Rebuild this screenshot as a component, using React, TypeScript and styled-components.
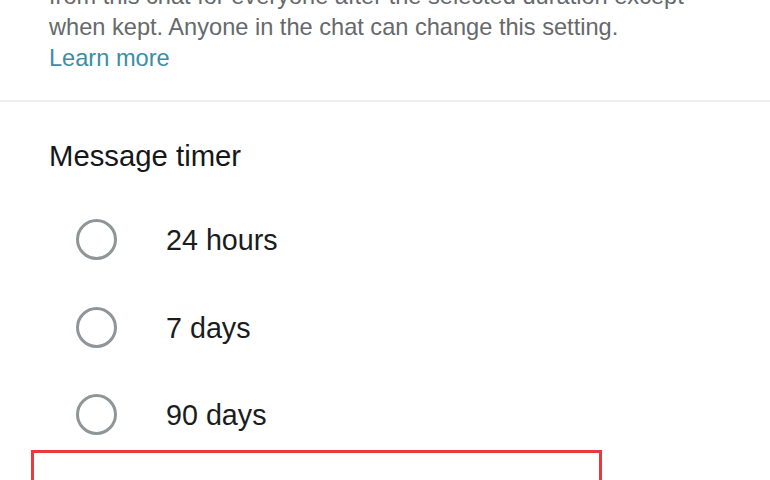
import styled, {createGlobalStyle} from 'styled-components';

const GlobalStyle = createGlobalStyle`
  html, body {
    margin: 0;
    padding: 0;
    background: #ffffff;
  }

  body {
    font-family: "Liberation Sans", Arial, sans-serif;
    -webkit-font-smoothing: antialiased;
  }
`;

const options = [
    {label: '24 hours', highlighted: false},
    {label: '7 days', highlighted: false},
    {label: '90 days', highlighted: false},
    {label: 'Off', highlighted: true},
];

const App = () => {
    return (
        <>
            <GlobalStyle/>
            <Screen>
                <Intro>
                    <p>
                        from this chat for everyone after the selected duration except<br/>
                        when kept. Anyone in the chat can change this setting.<br/>
                        <a href="#">Learn more</a>
                    </p>
                </Intro>
                <Divider/>
                <Section>
                    <Title>Message timer</Title>
                    <OptionList>
                        {options.map((o) => (
                            <Option key={o.label} $highlighted={o.highlighted}>
                                <Radio/>
                                <Label>{o.label}</Label>
                            </Option>
                        ))}
                    </OptionList>
                </Section>
            </Screen>
        </>
    )
};

const Screen = styled.main`
  width: 770px;
  height: 480px;
  overflow: hidden;
  background: #ffffff;
`;

const Intro = styled.div`
  /* page is scrolled, so the top of the text is cut off */
  margin-top: -19px;
  padding: 0 49px 26px;

  p {
    margin: 0;
    font-size: 23.6px;
    line-height: 31px;
    color: #66696c;
  }

  a {
    color: #3a8ea6;
    text-decoration: none;
  }
`;

const Divider = styled.hr`
  margin: 0;
  border: 0;
  height: 2px;
  background: #eeeeee;
`;

const Section = styled.section`
  padding-top: 37px;
`;

const Title = styled.h2`
  margin: 0;
  padding-left: 49px;
  font-size: 29.3px;
  line-height: 34px;
  font-weight: 400;
  color: #161719;
`;

const OptionList = styled.div`
  display: flex;
  flex-direction: column;
  margin-top: 23px;
  padding-left: 31px;
`;

const Option = styled.label<{ $highlighted: boolean }>`
  display: flex;
  align-items: center;
  gap: 49px;
  box-sizing: border-box;
  width: 571px;
  height: ${({$highlighted}) => ($highlighted ? '105.5px' : '87.5px')};
  margin-top: ${({$highlighted}) => ($highlighted ? '-9px' : '0')};
  padding: ${({$highlighted}) => ($highlighted ? '6px 0 6px 42px' : '0 0 0 45px')};
  border: ${({$highlighted}) => ($highlighted ? '3px solid #e8393d' : 'none')};
`;

const Radio = styled.span`
  flex: none;
  box-sizing: border-box;
  width: 41px;
  height: 41px;
  border: 3px solid #8f9598;
  border-radius: 50%;
`;

const Label = styled.span`
  padding-top: 2px;
  font-size: 28.7px;
  color: #1b1c1e;
`;

export default App;
